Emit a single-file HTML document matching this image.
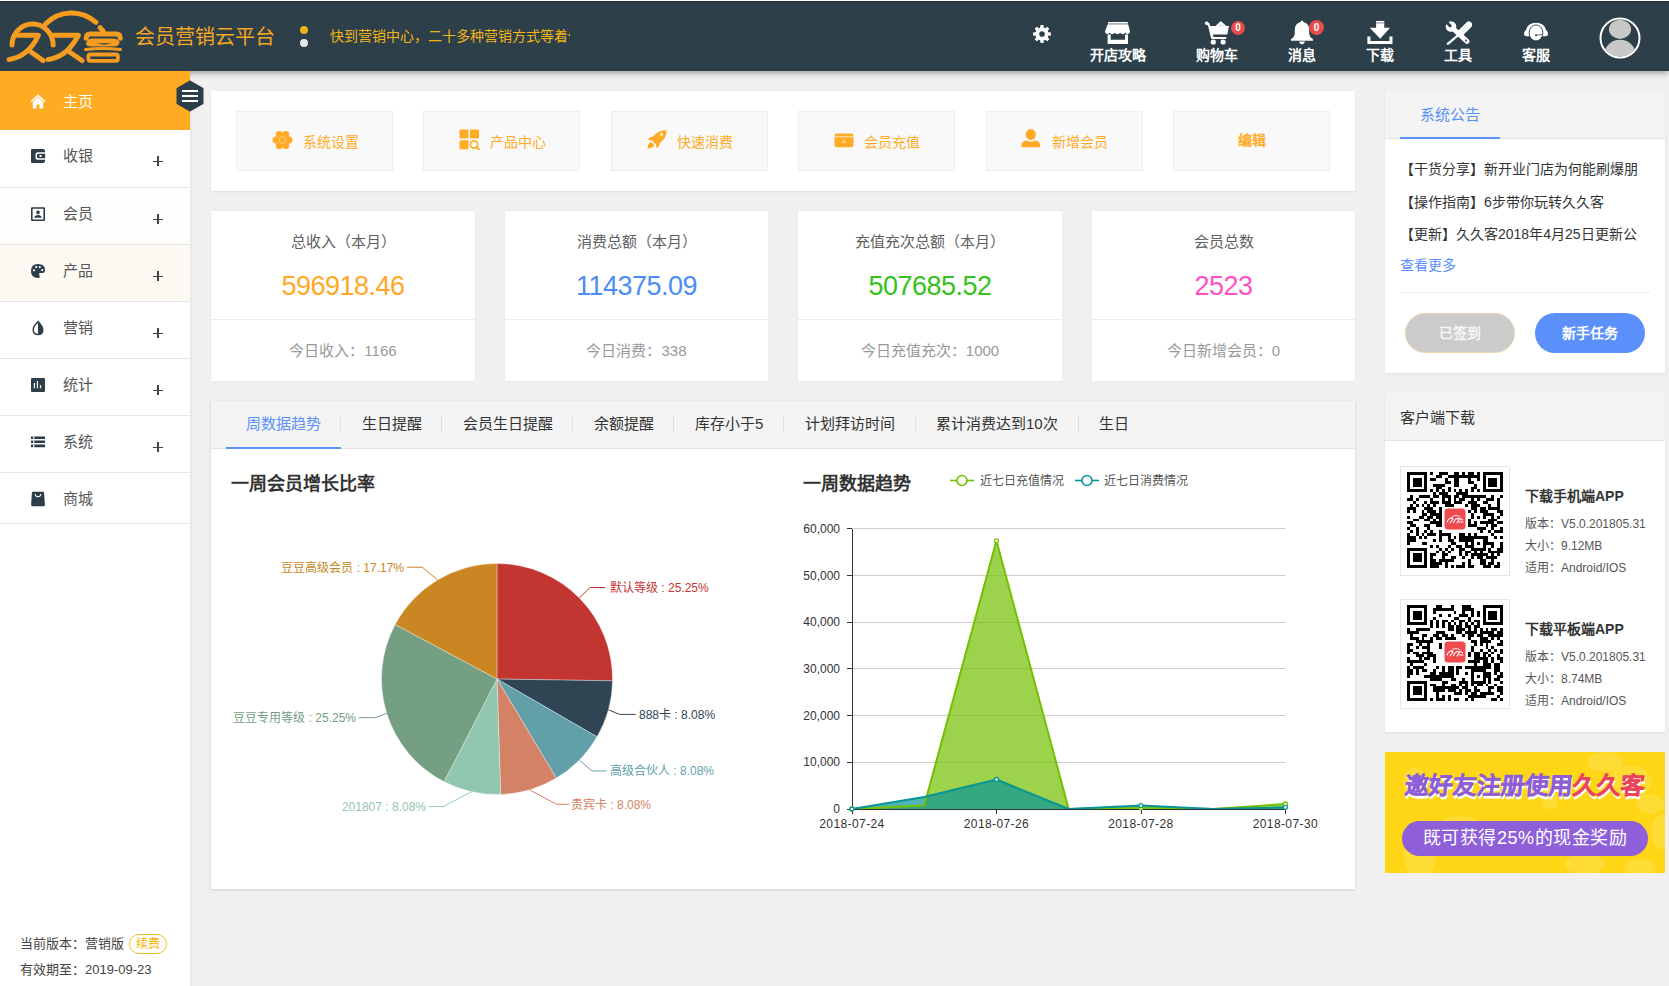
<!DOCTYPE html>
<html lang="zh-CN"><head><meta charset="utf-8">
<style>
*{margin:0;padding:0;box-sizing:border-box}
html,body{width:1669px;height:986px;overflow:hidden}
body{background:#f0f0f0;font-family:"Liberation Sans",sans-serif;position:relative;color:#333}
.a{position:absolute}
.t{position:absolute;white-space:nowrap;line-height:1}
#hdr{left:0;top:0;width:1669px;height:71px;background:#2d3f49;border-top:1px solid #fff;box-shadow:0 2px 6px rgba(0,0,0,.35);z-index:2}
#side{left:0;top:71px;width:190px;height:915px;background:#fff;z-index:3;box-shadow:1px 0 2px rgba(0,0,0,.06)}
.mi{position:absolute;left:0;width:190px;height:57px;border-bottom:1px solid #e6e6e6}
.mi .t{left:63px;top:18px;font-size:15px;color:#555}
.mi svg{position:absolute;left:30px;top:18px}
.plus{position:absolute;left:153px;top:26px;width:10px;height:10px}
.plus:before,.plus:after{content:"";position:absolute;background:#444}
.plus:before{left:0;top:4.6px;width:10px;height:1.2px}
.plus:after{left:4.4px;top:0;width:1.2px;height:10px}
.panel{position:absolute;background:#fff;box-shadow:0 1px 2px rgba(0,0,0,.07)}
.qb{position:absolute;top:111px;width:157px;height:60px;background:#f9f9f9;border:1px solid #eeeeee}
.qb .t{font-size:14px;color:#ffab26;top:23px}
.qb svg{position:absolute;top:18px}
.card{position:absolute;top:211px;height:170px;background:#fff;box-shadow:0 0 2px rgba(0,0,0,.05)}
.card .ttl{position:absolute;left:0;width:100%;top:23px;text-align:center;font-size:15px;line-height:1;color:#606060;white-space:nowrap}
.card .num{position:absolute;left:0;width:100%;top:62px;text-align:center;font-size:27px;letter-spacing:-0.5px;line-height:1;white-space:nowrap}
.card .div{position:absolute;left:0;top:108px;width:100%;height:1px;background:#ececec}
.card .sub{position:absolute;left:0;width:100%;top:132px;text-align:center;font-size:15px;line-height:1;color:#999;white-space:nowrap}
.tab{position:absolute;top:416px;font-size:15px;line-height:1;color:#333;white-space:nowrap}
.sep{position:absolute;top:415px;width:1px;height:18px;background:#e2e2e2}
</style></head><body>

<!-- HEADER -->
<div id="hdr" class="a"><div class="a" style="left:0;top:0;width:1669px;height:1px;background:#1f2f39"></div>
<svg class="a" style="left:0;top:-1px" width="130" height="71" viewBox="0 0 130 71"><g fill="none" stroke="#f39c1f" stroke-width="5" stroke-linecap="round" stroke-linejoin="round">
<path d="M12 45A20.6 21 0 0 1 53.2 45"/>
<path d="M45.5 24A36.2 36.2 0 0 1 96 22.4"/>
<path d="M16.5 35.3H38.4C33 47 25 57 9 59.6"/>
<path d="M31 52L43 60.5"/>
<path d="M53 35.3H78.4C72 47 64 57 48 59.6"/>
<path d="M69.5 52L82 60.5"/>
<path d="M100 27.6L103.2 31"/>
<path d="M86.2 38.3Q86.2 34 90 34H116.5Q120.2 34 120.2 38.3"/>
<path d="M85.5 49.5Q103 47.5 120.5 49.5" stroke-width="3"/>
<rect x="88.4" y="54.5" width="29.5" height="6.3" rx="2" stroke-width="3.8"/>
</g>
<path fill="#f39c1f" d="M86 43.5Q87 38.5 93 38.6L112 38.6Q120 38.8 119.5 43Q119 46.6 112 46.6L92 46.6Q85.5 46.5 86 43.5Z"/>
<path fill="#2d3f49" d="M97 43.2L111 43.2L104 44.8Z"/>
</svg>
<div class="t" style="left:135px;top:25.5px;font-size:20px;color:#f5a623;letter-spacing:0px">会员营销云平台</div>
<div class="a" style="left:300px;top:24.5px;width:8px;height:8px;border-radius:50%;background:#e9b10e"></div>
<div class="a" style="left:300px;top:37.5px;width:8px;height:8px;border-radius:50%;background:#e6e8ea"></div>
<div class="a" style="left:330px;top:26px;width:240px;height:20px;overflow:hidden"><div class="t" style="left:0;top:2px;font-size:14px;color:#f2b416">快到营销中心，二十多种营销方式等着你来体验</div></div>

<svg class="a" style="left:1032.5px;top:24px" width="18" height="18" viewBox="0 0 18 18"><path fill="#fff" fill-rule="evenodd" d="M7.14 2.67 L7.52 0.12 L10.48 0.12 L10.86 2.67 L12.17 3.21 L14.23 1.68 L16.32 3.77 L14.79 5.83 L15.33 7.14 L17.88 7.52 L17.88 10.48 L15.33 10.86 L14.79 12.17 L16.32 14.23 L14.23 16.32 L12.17 14.79 L10.86 15.33 L10.48 17.88 L7.52 17.88 L7.14 15.33 L5.83 14.79 L3.77 16.32 L1.68 14.23 L3.21 12.17 L2.67 10.86 L0.12 10.48 L0.12 7.52 L2.67 7.14 L3.21 5.83 L1.68 3.77 L3.77 1.68 L5.83 3.21ZM11.80 9.00A2.8 2.8 0 1 0 6.20 9.00A2.8 2.8 0 1 0 11.80 9.00Z"/></svg>

<svg class="a" style="left:1104px;top:20px" width="28" height="24" viewBox="0 0 28 24"><path fill="#fff" d="M4 1H23.8V2.4H4Z"/><path fill="#d5dade" d="M4 2.4H23.8L24.2 3.6H3.6Z"/><path fill="#fff" d="M3.6 3.6H24.2L26 10.6Q25.8 13 23.8 13Q22.3 13 21.5 11.8Q20.5 13.2 18.8 13.2Q17 13.2 16.2 11.8Q15.3 13.2 13.5 13.2Q11.7 13.2 10.8 11.8Q10 13.2 8.2 13.2Q6.5 13.2 5.5 11.8Q4.7 13 3.2 13Q1 13 1 10.6Z"/><path fill="#fff" d="M3.6 13.4H6.7V18.8H21V13.4H24V23H3.6Z"/></svg>
<div class="t" style="left:1090px;top:47px;font-size:14px;font-weight:bold;color:#fff">开店攻略</div>

<svg class="a" style="left:1204px;top:19px" width="27" height="26" viewBox="0 0 27 26"><g fill="#fff"><path d="M0.8 3.2Q0.8 1.5 2.5 1.5Q4 1.5 4.3 2.8H5.2L6.1 5.9H25L23.3 14.5H8.9L9.5 16.9H22.2V19H8.2Q7.3 19 7 18.1L3.9 5.2Q3.6 4.9 2.5 4.9Q0.8 4.9 0.8 3.2Z"/><circle cx="9.3" cy="22" r="2.6"/><circle cx="19.1" cy="22" r="2.6"/><path d="M11.5 6L16.8 0.9L22.3 6Z"/></g><path fill="#dfe3e6" d="M13 6.2L14.5 4.8H19.2L20.6 6.2Z"/></svg>
<div class="a" style="left:1231px;top:19.5px;width:14px;height:14px;border-radius:50%;background:#e94b4b;color:#fff;font-size:10px;font-weight:bold;line-height:14px;text-align:center">0</div>
<div class="t" style="left:1196px;top:47px;font-size:14px;font-weight:bold;color:#fff">购物车</div>

<svg class="a" style="left:1290px;top:19px" width="24" height="25" viewBox="0 0 24 25"><path fill="#fff" d="M12 0.5Q13.2 0.5 13.3 2Q19 3.2 19.2 9.5V14Q19.5 17 23 19.2V20.7H1V19.2Q4.5 17 4.8 14V9.5Q5 3.2 10.7 2Q10.8 0.5 12 0.5Z"/><path fill="#fff" d="M9.2 21.5H14.8Q14.5 24.3 12 24.3Q9.5 24.3 9.2 21.5Z"/></svg>
<div class="a" style="left:1309px;top:18.5px;width:15px;height:15px;border-radius:50%;background:#e94b4b;color:#fff;font-size:10px;font-weight:bold;line-height:15px;text-align:center">0</div>
<div class="t" style="left:1288px;top:47px;font-size:14px;font-weight:bold;color:#fff">消息</div>

<svg class="a" style="left:1366px;top:19px" width="28" height="25" viewBox="0 0 28 25"><path fill="#fff" d="M10.1 0.9H18.3V2.6H10.1Z"/><path fill="#c9cfd3" d="M10.1 2.6H18.3V4H10.1Z"/><path fill="#fff" d="M10.1 4H18.3V7.7H24.1L14.2 18.8L3.7 7.7H10.1Z"/><path fill="#fff" d="M1.4 16.4H4.4V21H23.5V16.4H26.5V24H1.4Z"/></svg>
<div class="t" style="left:1366px;top:47px;font-size:14px;font-weight:bold;color:#fff">下载</div>

<svg class="a" style="left:1444px;top:19px" width="28" height="26" viewBox="0 0 28 26"><g stroke="#fff" stroke-linecap="round" fill="none"><path d="M9.5 9L23 21.3" stroke-width="5"/><path d="M24.8 4.8L16.2 13.4" stroke-width="6.6"/><path d="M16.2 13.4L4.2 23.6" stroke-width="2.3"/></g><circle cx="7" cy="6.5" r="5.3" fill="#fff"/><path fill="#2d3f49" d="M0.6 0.6L3.2 0.6L7.6 5.2Q7.8 7.4 5.6 7.6L0.6 2.6Z"/><path d="M22.8 5.2L17.3 10.7M24.3 6.7L18.8 12.2" stroke="#c9cfd3" stroke-width="0.7"/><circle cx="22" cy="20.4" r="1" fill="#2d3f49"/><path fill="#fff" d="M3 25L2.6 23.6L4.8 21.7L5.8 22.7Z"/></svg>
<div class="t" style="left:1444px;top:47px;font-size:14px;font-weight:bold;color:#fff">工具</div>

<svg class="a" style="left:1523px;top:21px" width="26" height="20" viewBox="0 0 26 20"><path fill="#fff" d="M1 12Q1 9.2 2.8 8.2Q5 0.8 13 0.8Q21 0.8 23.2 8.2Q25 9.2 25 12Q25 14.3 22.6 14.3H3.4Q1 14.3 1 12Z"/><ellipse cx="13" cy="10.9" rx="6.9" ry="8" fill="#fff" stroke="#2d3f49" stroke-width="0.9"/><circle cx="13" cy="13.3" r="1" fill="#2d3f49"/><path d="M13 13.3L19.8 12.3" stroke="#2d3f49" stroke-width="0.7"/></svg>
<div class="t" style="left:1522px;top:47px;font-size:14px;font-weight:bold;color:#fff">客服</div>

<svg class="a" style="left:1599px;top:16px" width="42" height="42" viewBox="0 0 42 42"><defs><clipPath id="avc"><circle cx="21" cy="21" r="18.8"/></clipPath></defs><circle cx="21" cy="21" r="19.5" fill="none" stroke="#fff" stroke-width="2"/><g clip-path="url(#avc)" fill="#c8c8c8"><ellipse cx="21" cy="12.3" rx="11" ry="9.6"/><ellipse cx="21" cy="36.8" rx="15.5" ry="14"/></g></svg>
</div>

<!-- SIDEBAR -->
<div id="side" class="a">
<div class="a" style="left:0;top:0;width:190px;height:59px;background:#ffac22"></div>
<svg class="a" style="left:30px;top:23px" width="16" height="15" viewBox="0 0 16 15"><path fill="#fff" d="M8 0.3L15.6 7.2L14.6 8.3L8 2.4L1.4 8.3L0.4 7.2Z"/><path fill="#fff" d="M2.8 8L8 3.3L13.2 8V14.6H9.5V10.5H6.5V14.6H2.8Z"/></svg>
<div class="t" style="left:63px;top:23px;font-size:15px;color:#fff">主页</div>

<div class="mi" style="top:59px;height:58px;background:#fff"><svg width="16" height="16" viewBox="0 0 16 16"><path fill="#2d3e4a" fill-rule="evenodd" d="M2 1H13Q15 1 15 3V4.2H8Q5.5 4.2 5.5 6.8V9.2Q5.5 11.8 8 11.8H15V13Q15 15 13 15H2Q1 15 1 14V2Q1 1 2 1ZM8.5 5.7H15.2V10.3H8.5Q7 10.3 7 8.8V7.2Q7 5.7 8.5 5.7ZM9.5 7V9H11.5V7Z"/></svg><div class="t">收银</div><div class="plus"></div></div>
<div class="mi" style="top:117px;background:#fefdfb"><svg width="16" height="16" viewBox="0 0 16 16"><path fill="#2d3e4a" fill-rule="evenodd" d="M2 1.2H14Q15 1.2 15 2.2V14Q15 15 14 15H2Q1 15 1 14V2.2Q1 1.2 2 1.2ZM2.6 2.8V13.4H13.4V2.8ZM8 4.6A1.8 1.8 0 1 1 8 8.2A1.8 1.8 0 1 1 8 4.6ZM4.2 11.8Q5 9 8 9Q11 9 11.8 11.8Z"/></svg><div class="t">会员</div><div class="plus"></div></div>
<div class="mi" style="top:174px;background:#fdfaf3"><svg width="16" height="16" viewBox="0 0 16 16"><path fill="#2d3e4a" fill-rule="evenodd" d="M8 1Q15 1 15 7.2Q15 10 12 10H10.3Q9 10 9 11.2Q9 12 9.6 12.7Q10 13.4 9.4 14.4Q8.9 15 8 15Q1 15 1 8Q1 1 8 1ZM4 6.2A1.1 1.1 0 1 0 4 8.4A1.1 1.1 0 1 0 4 6.2ZM6.2 3A1.1 1.1 0 1 0 6.2 5.2A1.1 1.1 0 1 0 6.2 3ZM9.8 3A1.1 1.1 0 1 0 9.8 5.2A1.1 1.1 0 1 0 9.8 3ZM12.2 6A1.1 1.1 0 1 0 12.2 8.2A1.1 1.1 0 1 0 12.2 6Z"/></svg><div class="t">产品</div><div class="plus"></div></div>
<div class="mi" style="top:231px;background:#fff"><svg width="16" height="16" viewBox="0 0 16 16"><path fill="#2d3e4a" fill-rule="evenodd" d="M8 0.5Q13.5 6 13.5 9.8Q13.5 15.3 8 15.3Q2.5 15.3 2.5 9.8Q2.5 6 8 0.5ZM8 2.8Q3.9 7 3.9 9.8Q3.9 13.8 8 13.9Z"/></svg><div class="t">营销</div><div class="plus"></div></div>
<div class="mi" style="top:288px;background:#fff"><svg width="16" height="16" viewBox="0 0 16 16"><path fill="#2d3e4a" fill-rule="evenodd" d="M2.2 1H13.8Q15 1 15 2.2V13.8Q15 15 13.8 15H2.2Q1 15 1 13.8V2.2Q1 1 2.2 1ZM3.8 6V11.2H5V6ZM6.8 4V11.2H8.1V4ZM9.9 8V11.2H11.2V8Z"/></svg><div class="t">统计</div><div class="plus"></div></div>
<div class="mi" style="top:345px;background:#fff"><svg width="16" height="16" viewBox="0 0 16 16"><path fill="#2d3e4a" d="M1 2.5H3.2V5H1ZM4.3 2.5H15V5H4.3ZM1 6.4H3.2V9.1H1ZM4.3 6.4H15V9.1H4.3ZM1 10.6H3.2V13.3H1ZM4.3 10.6H15V13.3H4.3Z"/></svg><div class="t">系统</div><div class="plus"></div></div>
<div class="mi" style="top:402px;height:51px;background:#fff"><svg width="16" height="16" viewBox="0 0 16 16"><path fill="#2d3e4a" fill-rule="evenodd" d="M3 0.8H13Q14 0.8 14.1 2L14.9 13.8Q15 15.2 13.6 15.2H2.4Q1 15.2 1.1 13.8L1.9 2Q2 0.8 3 0.8ZM4.7 3Q5 6.3 8 6.3Q11 6.3 11.3 3H10.3Q10 5.2 8 5.2Q6 5.2 5.7 3Z"/></svg><div class="t">商城</div></div>

<div class="t" style="left:20px;top:866px;font-size:13px;color:#444">当前版本：营销版</div>
<div class="a" style="left:129px;top:863px;width:38px;height:20px;border:1px solid #f5b82a;border-radius:10px;font-size:12px;line-height:18px;text-align:center;color:#f5b200">续费</div>
<div class="t" style="left:20px;top:892px;font-size:13px;color:#444">有效期至：2019-09-23</div>
</div>
<svg class="a" style="left:176px;top:80px;z-index:4" width="28" height="32" viewBox="0 0 28 32"><path fill="#2d3f49" d="M14 1.8L26.2 8.8V23.2L14 30.2L1.8 23.2V8.8Z" stroke="#2d3f49" stroke-width="2.6" stroke-linejoin="round"/><path fill="#fff" d="M6 10H22V12H6ZM6 15H22V17H6ZM6 20H22V22H6Z"/></svg>

<!-- MAIN -->
<div class="panel" style="left:211px;top:91px;width:1144px;height:100px"></div>
<div class="qb" style="left:236px"><svg style="left:35px;top:18px" width="21" height="20" viewBox="0 0 21 20"><g fill="#ffab26"><circle cx="10.5" cy="10" r="7.3"/><circle cx="13.80" cy="4.28" r="3.4"/><circle cx="17.10" cy="10.00" r="3.4"/><circle cx="13.80" cy="15.72" r="3.4"/><circle cx="7.20" cy="15.72" r="3.4"/><circle cx="3.90" cy="10.00" r="3.4"/><circle cx="7.20" cy="4.28" r="3.4"/></g><ellipse cx="10.5" cy="10" rx="3.3" ry="3.5" fill="none" stroke="#ffdca0" stroke-width="0.7"/></svg><div class="t" style="left:66px">系统设置</div></div>
<div class="qb" style="left:423px"><svg style="left:35px;top:17px" width="21" height="21" viewBox="0 0 21 21"><g fill="#ffab26"><rect x="0.5" y="0.5" width="9" height="9" rx="1.2"/><rect x="11" y="0.5" width="9" height="9" rx="1.2"/><rect x="0.5" y="11.3" width="9" height="9" rx="1.2"/></g><circle cx="15" cy="15.5" r="3.6" fill="none" stroke="#ffab26" stroke-width="1.7"/><path d="M17.5 18L20 20.5" stroke="#ffab26" stroke-width="1.8" stroke-linecap="round"/></svg><div class="t" style="left:66px">产品中心</div></div>
<div class="qb" style="left:611px"><svg style="left:35px;top:17px" width="20" height="20" viewBox="0 0 21 21"><path fill="#ffab26" fill-rule="evenodd" d="M20.5 1.2Q20.8 7.5 16 12.6Q14.6 14 13.3 14.6Q13.6 17.6 10.8 19.6L10 20L9.5 16.4L5 12L1 11.5Q3 8 6.5 8Q7.5 6.5 8.7 5.5Q13.5 1 20.5 1.2ZM15.3 4.2A1.5 1.5 0 1 0 15.3 7.2A1.5 1.5 0 1 0 15.3 4.2Z"/><path fill="#ffab26" d="M4.2 13.5L7.8 17Q5.5 20.3 0.5 20.5Q0.7 15.8 4.2 13.5Z"/></svg><div class="t" style="left:65px">快速消费</div></div>
<div class="qb" style="left:798px"><svg style="left:35px;top:20.5px" width="20" height="15" viewBox="0 0 20 16" preserveAspectRatio="none"><path fill="#ffab26" d="M2.8 0.5H17.2Q19.5 0.5 19.5 2.8V3.6H0.5V2.8Q0.5 0.5 2.8 0.5Z"/><path fill="#ffab26" d="M0.5 4.5H19.5V13Q19.5 15.3 17.2 15.3H2.8Q0.5 15.3 0.5 13Z"/><path fill="none" stroke="#ffd98a" stroke-width="0.7" d="M8.6 6.5L10 8.3L11.4 6.5M10 8.3V11.3M8.2 9H11.8M8.2 10.2H11.8"/></svg><div class="t" style="left:65px">会员充值</div></div>
<div class="qb" style="left:986px"><svg style="left:34px;top:17px" width="20" height="19" viewBox="0 0 21 20"><ellipse cx="10.3" cy="5.8" rx="5.4" ry="5.7" fill="#ffab26"/><path fill="#ffab26" d="M5.3 12.2Q7.5 13.3 10.3 13.3Q13 13.3 15.3 12.2Q20 13 20.3 17.5Q20.3 19.3 18.5 19.3H2.2Q0.3 19.3 0.3 17.5Q0.6 13 5.3 12.2Z"/></svg><div class="t" style="left:65px">新增会员</div></div>
<div class="qb" style="left:1173px"><div class="t" style="left:64px;top:21px;font-weight:bold">编辑</div></div>

<div class="card" style="left:211px;width:264px"><div class="ttl">总收入（本月）</div><div class="num" style="color:#ffa726">596918.46</div><div class="div"></div><div class="sub">今日收入：1166</div></div>
<div class="card" style="left:505px;width:263px"><div class="ttl">消费总额（本月）</div><div class="num" style="color:#4d8df4">114375.09</div><div class="div"></div><div class="sub">今日消费：338</div></div>
<div class="card" style="left:798px;width:264px"><div class="ttl">充值充次总额（本月）</div><div class="num" style="color:#36c21c">507685.52</div><div class="div"></div><div class="sub">今日充值充次：1000</div></div>
<div class="card" style="left:1092px;width:263px"><div class="ttl">会员总数</div><div class="num" style="color:#ff50c3">2523</div><div class="div"></div><div class="sub">今日新增会员：0</div></div>

<div class="panel" style="left:211px;top:401px;width:1144px;height:488px;box-shadow:0 1px 3px rgba(0,0,0,.13)"></div>
<div class="a" style="left:211px;top:401px;width:1144px;height:48px;background:#f4f4f4;border-bottom:1px solid #e8e3e3"></div>
<div class="a" style="left:226px;top:447px;width:115px;height:2px;background:#5b8ff9"></div>
<div class="tab" style="left:246px;color:#5b8ff9">周数据趋势</div>
<div class="sep" style="left:340px"></div>
<div class="tab" style="left:362px">生日提醒</div>
<div class="sep" style="left:441px"></div>
<div class="tab" style="left:463px">会员生日提醒</div>
<div class="sep" style="left:572px"></div>
<div class="tab" style="left:594px">余额提醒</div>
<div class="sep" style="left:673px"></div>
<div class="tab" style="left:695px">库存小于5</div>
<div class="sep" style="left:783px"></div>
<div class="tab" style="left:805px">计划拜访时间</div>
<div class="sep" style="left:915px"></div>
<div class="tab" style="left:936px">累计消费达到10次</div>
<div class="sep" style="left:1078px"></div>
<div class="tab" style="left:1099px">生日</div>
<div class="t" style="left:231px;top:475px;font-size:18px;font-weight:bold;color:#333">一周会员增长比率</div>
<div class="t" style="left:803px;top:475px;font-size:18px;font-weight:bold;color:#333">一周数据趋势</div>
<svg class="a" style="left:0;top:0" width="1669" height="986" viewBox="0 0 1669 986">
<g><path fill="#c23531" stroke="#fff" stroke-width="0.35" stroke-linejoin="round" d="M497 679L497.00 563.50A115.5 115.5 0 0 1 612.49 680.83Z"/>
<path fill="#2f4554" stroke="#fff" stroke-width="0.35" stroke-linejoin="round" d="M497 679L612.49 680.83A115.5 115.5 0 0 1 597.03 736.75Z"/>
<path fill="#61a0a8" stroke="#fff" stroke-width="0.35" stroke-linejoin="round" d="M497 679L597.03 736.75A115.5 115.5 0 0 1 556.33 778.10Z"/>
<path fill="#d48265" stroke="#fff" stroke-width="0.35" stroke-linejoin="round" d="M497 679L556.33 778.10A115.5 115.5 0 0 1 500.66 794.44Z"/>
<path fill="#91c7ae" stroke="#fff" stroke-width="0.35" stroke-linejoin="round" d="M497 679L500.66 794.44A115.5 115.5 0 0 1 444.07 781.66Z"/>
<path fill="#749f83" stroke="#fff" stroke-width="0.35" stroke-linejoin="round" d="M497 679L444.07 781.66A115.5 115.5 0 0 1 395.19 624.45Z"/>
<path fill="#ca8622" stroke="#fff" stroke-width="0.35" stroke-linejoin="round" d="M497 679L395.19 624.45A115.5 115.5 0 0 1 497.00 563.50Z"/></g>
<g fill="none" stroke-width="1">
<path stroke="#c23531" d="M579.3 598L590 587.5H605"/>
<path stroke="#2f4554" d="M608.3 709.8L619.5 714.4H635.7"/>
<path stroke="#61a0a8" d="M579.3 760L592 771H606.6"/>
<path stroke="#d48265" d="M529.5 789.8L556.5 804.3H569.4"/>
<path stroke="#91c7ae" d="M471.6 791.7L443.2 806.6H428.7"/>
<path stroke="#749f83" d="M386.7 713.3L375.3 717.6H359"/>
<path stroke="#ca8622" d="M437.7 580L422.2 567.2H407"/>
</g>
<g font-family="Liberation Sans, sans-serif" font-size="12">
<text x="610" y="592" fill="#c23531">默认等级 : 25.25%</text>
<text x="639" y="718.5" fill="#2f4554">888卡 : 8.08%</text>
<text x="610" y="775" fill="#61a0a8">高级合伙人 : 8.08%</text>
<text x="571" y="808.5" fill="#d48265">贵宾卡 : 8.08%</text>
<text x="426" y="810.5" fill="#91c7ae" text-anchor="end">201807 : 8.08%</text>
<text x="356" y="722" fill="#749f83" text-anchor="end">豆豆专用等级 : 25.25%</text>
<text x="404" y="571.5" fill="#ca8622" text-anchor="end">豆豆高级会员 : 17.17%</text>
</g>
<path d="M852 762.5H1285.5" stroke="#cfcfcf" stroke-width="1"/><path d="M852 715.5H1285.5" stroke="#cfcfcf" stroke-width="1"/><path d="M852 668.5H1285.5" stroke="#cfcfcf" stroke-width="1"/><path d="M852 622.5H1285.5" stroke="#cfcfcf" stroke-width="1"/><path d="M852 575.5H1285.5" stroke="#cfcfcf" stroke-width="1"/><path d="M852 528.5H1285.5" stroke="#cfcfcf" stroke-width="1"/>
<path d="M852.00 809.00 924.23 805.59 996.46 540.79 1068.69 809.00 1140.92 808.07 1213.15 809.00 1285.38 804.01" fill="none"/>
<path d="M852.00 809 L852.00 809.00 L924.23 805.59 L996.46 540.79 L1068.69 809.00 L1140.92 808.07 L1213.15 809.00 L1285.38 804.01 L1285.38 809Z" fill="#73c000" fill-opacity="0.7"/>
<path d="M852.00 809 L852.00 809.00 L924.23 797.01 L996.46 779.50 L1068.69 809.00 L1140.92 805.59 L1213.15 809.00 L1285.38 807.32 L1285.38 809Z" fill="#089595" fill-opacity="0.7"/>
<polyline points="852.00,809.00 924.23,805.59 996.46,540.79 1068.69,809.00 1140.92,808.07 1213.15,809.00 1285.38,804.01" fill="none" stroke="#73c000" stroke-width="2" stroke-linejoin="round"/>
<polyline points="852.00,809.00 924.23,797.01 996.46,779.50 1068.69,809.00 1140.92,805.59 1213.15,809.00 1285.38,807.32" fill="none" stroke="#089595" stroke-width="2" stroke-linejoin="round"/>
<path d="M852.5 529V809.5H1285.5" fill="none" stroke="#333" stroke-width="1"/>
<path d="M847 809.5H852" stroke="#333" stroke-width="1"/><path d="M847 762.5H852" stroke="#333" stroke-width="1"/><path d="M847 715.5H852" stroke="#333" stroke-width="1"/><path d="M847 668.5H852" stroke="#333" stroke-width="1"/><path d="M847 622.5H852" stroke="#333" stroke-width="1"/><path d="M847 575.5H852" stroke="#333" stroke-width="1"/><path d="M847 528.5H852" stroke="#333" stroke-width="1"/><path d="M852.5 809V814" stroke="#333" stroke-width="1"/><path d="M996.5 809V814" stroke="#333" stroke-width="1"/><path d="M1141.5 809V814" stroke="#333" stroke-width="1"/><path d="M1285.5 809V814" stroke="#333" stroke-width="1"/><circle cx="852.00" cy="809.00" r="2" fill="#fff" stroke="#73c000" stroke-width="1.3"/><circle cx="996.46" cy="540.79" r="2" fill="#fff" stroke="#73c000" stroke-width="1.3"/><circle cx="1140.92" cy="808.07" r="2" fill="#fff" stroke="#73c000" stroke-width="1.3"/><circle cx="1285.38" cy="804.01" r="2" fill="#fff" stroke="#73c000" stroke-width="1.3"/><circle cx="852.00" cy="809.00" r="2" fill="#fff" stroke="#089595" stroke-width="1.3"/><circle cx="996.46" cy="779.50" r="2" fill="#fff" stroke="#089595" stroke-width="1.3"/><circle cx="1140.92" cy="805.59" r="2" fill="#fff" stroke="#089595" stroke-width="1.3"/><circle cx="1285.38" cy="807.32" r="2" fill="#fff" stroke="#089595" stroke-width="1.3"/>
<g font-family="Liberation Sans, sans-serif" font-size="12" fill="#333"><text x="840" y="813.0" text-anchor="end">0</text><text x="840" y="766.3" text-anchor="end">10,000</text><text x="840" y="719.7" text-anchor="end">20,000</text><text x="840" y="673.0" text-anchor="end">30,000</text><text x="840" y="626.3" text-anchor="end">40,000</text><text x="840" y="579.7" text-anchor="end">50,000</text><text x="840" y="533.0" text-anchor="end">60,000</text><text x="852.00" y="828" text-anchor="middle" letter-spacing="0.4">2018-07-24</text><text x="996.46" y="828" text-anchor="middle" letter-spacing="0.4">2018-07-26</text><text x="1140.92" y="828" text-anchor="middle" letter-spacing="0.4">2018-07-28</text><text x="1285.38" y="828" text-anchor="middle" letter-spacing="0.4">2018-07-30</text></g>
<g fill="none" stroke-width="1.6"><path stroke="#73c000" d="M950 480.5H974"/><circle cx="962" cy="480.5" r="5" fill="#fff" stroke="#73c000"/><path stroke="#089595" d="M1075 480.5H1099"/><circle cx="1087" cy="480.5" r="5" fill="#fff" stroke="#089595"/></g>
<g font-family="Liberation Sans, sans-serif" font-size="12" fill="#555"><text x="980" y="485">近七日充值情况</text><text x="1104" y="485">近七日消费情况</text></g>
</svg>

<div class="panel" style="left:1385px;top:91px;width:280px;height:282px"></div>
<div class="a" style="left:1385px;top:91px;width:280px;height:48px;background:#f4f4f4;border-bottom:1px solid #e8e3e3"></div>
<div class="a" style="left:1400px;top:137px;width:100px;height:2px;background:#5b8ff9"></div>
<div class="t" style="left:1420px;top:107px;font-size:15px;color:#5b8ff9">系统公告</div>
<div class="t" style="left:1400px;top:162px;font-size:14px;color:#333">【干货分享】新开业门店为何能刷爆朋</div>
<div class="t" style="left:1400px;top:195px;font-size:14px;color:#333">【操作指南】6步带你玩转久久客</div>
<div class="t" style="left:1400px;top:227px;font-size:14px;color:#333">【更新】久久客2018年4月25日更新公</div>
<div class="t" style="left:1400px;top:258px;font-size:14px;color:#5b8ff9">查看更多</div>
<div class="a" style="left:1400px;top:292px;width:250px;height:1px;background:#ececec"></div>
<div class="a" style="left:1405px;top:313px;width:110px;height:40px;border-radius:20px;background:#cbcbcb;border:1px solid #ead7ad;color:#f7f7f7;font-size:14px;font-weight:bold;line-height:38px;text-align:center">已签到</div>
<div class="a" style="left:1535px;top:313px;width:110px;height:40px;border-radius:20px;background:#5b8ff9;color:#fff;font-size:14px;font-weight:bold;line-height:40px;text-align:center">新手任务</div>

<div class="panel" style="left:1385px;top:393px;width:280px;height:339px"></div>
<div class="a" style="left:1385px;top:393px;width:280px;height:48px;background:#f4f4f4;border-bottom:1px solid #e8e3e3"></div>
<div class="t" style="left:1400px;top:410px;font-size:15px;color:#333">客户端下载</div>
<div class="a" style="left:1400px;top:466px;width:110px;height:110px;background:#fff;border:1px solid #e6e6e6"></div>
<svg class="a" style="left:1407px;top:472px" width="96" height="96" viewBox="0 0 33 33" shape-rendering="crispEdges"><path fill="#000" d="M0 0h7v1h-7zM8 0h1v1h-1zM11 0h3v1h-3zM16 0h2v1h-2zM19 0h1v1h-1zM21 0h2v1h-2zM24 0h1v1h-1zM26 0h7v1h-7zM0 1h1v1h-1zM6 1h1v1h-1zM10 1h2v1h-2zM14 1h11v1h-11zM26 1h1v1h-1zM32 1h1v1h-1zM0 2h1v1h-1zM2 2h3v1h-3zM6 2h1v1h-1zM8 2h2v1h-2zM13 2h1v1h-1zM16 2h2v1h-2zM21 2h1v1h-1zM24 2h1v1h-1zM26 2h1v1h-1zM28 2h3v1h-3zM32 2h1v1h-1zM0 3h1v1h-1zM2 3h3v1h-3zM6 3h1v1h-1zM13 3h2v1h-2zM16 3h2v1h-2zM21 3h2v1h-2zM26 3h1v1h-1zM28 3h3v1h-3zM32 3h1v1h-1zM0 4h1v1h-1zM2 4h3v1h-3zM6 4h1v1h-1zM9 4h4v1h-4zM16 4h2v1h-2zM23 4h1v1h-1zM26 4h1v1h-1zM28 4h3v1h-3zM32 4h1v1h-1zM0 5h1v1h-1zM6 5h1v1h-1zM10 5h2v1h-2zM14 5h1v1h-1zM22 5h2v1h-2zM26 5h1v1h-1zM32 5h1v1h-1zM0 6h7v1h-7zM8 6h1v1h-1zM10 6h1v1h-1zM12 6h1v1h-1zM14 6h1v1h-1zM16 6h1v1h-1zM18 6h1v1h-1zM20 6h1v1h-1zM22 6h1v1h-1zM24 6h1v1h-1zM26 6h7v1h-7zM9 7h1v1h-1zM11 7h3v1h-3zM17 7h4v1h-4zM1 8h1v1h-1zM4 8h4v1h-4zM9 8h2v1h-2zM12 8h3v1h-3zM16 8h2v1h-2zM19 8h8v1h-8zM29 8h1v1h-1zM32 8h1v1h-1zM0 9h2v1h-2zM3 9h1v1h-1zM8 9h1v1h-1zM12 9h1v1h-1zM14 9h1v1h-1zM16 9h1v1h-1zM18 9h2v1h-2zM22 9h1v1h-1zM24 9h1v1h-1zM27 9h3v1h-3zM31 9h1v1h-1zM2 10h1v1h-1zM6 10h1v1h-1zM8 10h3v1h-3zM12 10h3v1h-3zM16 10h3v1h-3zM21 10h3v1h-3zM26 10h2v1h-2zM31 10h1v1h-1zM1 11h1v1h-1zM3 11h1v1h-1zM5 11h1v1h-1zM7 11h1v1h-1zM9 11h1v1h-1zM13 11h3v1h-3zM20 11h1v1h-1zM22 11h3v1h-3zM28 11h1v1h-1zM31 11h1v1h-1zM0 12h3v1h-3zM6 12h3v1h-3zM11 12h1v1h-1zM22 12h2v1h-2zM25 12h2v1h-2zM28 12h4v1h-4zM0 13h1v1h-1zM2 13h1v1h-1zM5 13h1v1h-1zM7 13h3v1h-3zM11 13h1v1h-1zM21 13h1v1h-1zM23 13h1v1h-1zM25 13h3v1h-3zM31 13h2v1h-2zM5 14h2v1h-2zM8 14h4v1h-4zM22 14h1v1h-1zM26 14h4v1h-4zM32 14h1v1h-1zM0 15h1v1h-1zM4 15h2v1h-2zM7 15h2v1h-2zM10 15h2v1h-2zM22 15h1v1h-1zM24 15h1v1h-1zM26 15h1v1h-1zM29 15h1v1h-1zM31 15h1v1h-1zM2 16h2v1h-2zM6 16h2v1h-2zM9 16h1v1h-1zM11 16h1v1h-1zM21 16h1v1h-1zM28 16h3v1h-3zM0 17h2v1h-2zM8 17h4v1h-4zM21 17h1v1h-1zM23 17h1v1h-1zM25 17h5v1h-5zM31 17h2v1h-2zM1 18h2v1h-2zM6 18h2v1h-2zM10 18h2v1h-2zM21 18h3v1h-3zM27 18h1v1h-1zM29 18h2v1h-2zM0 19h1v1h-1zM3 19h1v1h-1zM7 19h1v1h-1zM24 19h3v1h-3zM29 19h1v1h-1zM32 19h1v1h-1zM1 20h1v1h-1zM3 20h1v1h-1zM6 20h1v1h-1zM8 20h1v1h-1zM11 20h1v1h-1zM25 20h1v1h-1zM28 20h1v1h-1zM30 20h3v1h-3zM0 21h1v1h-1zM3 21h1v1h-1zM5 21h1v1h-1zM7 21h3v1h-3zM11 21h4v1h-4zM18 21h2v1h-2zM21 21h1v1h-1zM23 21h1v1h-1zM29 21h1v1h-1zM0 22h3v1h-3zM4 22h1v1h-1zM6 22h1v1h-1zM11 22h1v1h-1zM14 22h1v1h-1zM16 22h1v1h-1zM18 22h10v1h-10zM30 22h1v1h-1zM32 22h1v1h-1zM0 23h3v1h-3zM9 23h1v1h-1zM11 23h1v1h-1zM14 23h2v1h-2zM18 23h5v1h-5zM26 23h2v1h-2zM0 24h1v1h-1zM5 24h2v1h-2zM15 24h2v1h-2zM20 24h1v1h-1zM22 24h1v1h-1zM24 24h1v1h-1zM26 24h4v1h-4zM32 24h1v1h-1zM8 25h1v1h-1zM10 25h1v1h-1zM14 25h1v1h-1zM17 25h2v1h-2zM20 25h3v1h-3zM26 25h1v1h-1zM29 25h1v1h-1zM32 25h1v1h-1zM0 26h7v1h-7zM11 26h1v1h-1zM13 26h1v1h-1zM15 26h1v1h-1zM18 26h2v1h-2zM22 26h5v1h-5zM28 26h1v1h-1zM31 26h2v1h-2zM0 27h1v1h-1zM6 27h1v1h-1zM10 27h1v1h-1zM12 27h1v1h-1zM14 27h1v1h-1zM18 27h1v1h-1zM20 27h2v1h-2zM23 27h1v1h-1zM25 27h1v1h-1zM28 27h5v1h-5zM0 28h1v1h-1zM2 28h3v1h-3zM6 28h1v1h-1zM8 28h2v1h-2zM12 28h2v1h-2zM18 28h1v1h-1zM20 28h1v1h-1zM22 28h6v1h-6zM29 28h1v1h-1zM31 28h1v1h-1zM0 29h1v1h-1zM2 29h3v1h-3zM6 29h1v1h-1zM8 29h1v1h-1zM12 29h1v1h-1zM15 29h2v1h-2zM19 29h1v1h-1zM22 29h1v1h-1zM24 29h2v1h-2zM27 29h4v1h-4zM0 30h1v1h-1zM2 30h3v1h-3zM6 30h1v1h-1zM8 30h2v1h-2zM11 30h5v1h-5zM21 30h1v1h-1zM25 30h2v1h-2zM29 30h1v1h-1zM0 31h1v1h-1zM6 31h1v1h-1zM8 31h4v1h-4zM13 31h1v1h-1zM19 31h1v1h-1zM21 31h1v1h-1zM25 31h2v1h-2zM28 31h2v1h-2zM31 31h1v1h-1zM0 32h7v1h-7zM8 32h3v1h-3zM13 32h1v1h-1zM15 32h1v1h-1zM17 32h3v1h-3zM21 32h2v1h-2zM26 32h3v1h-3zM30 32h2v1h-2z"/></svg>
<svg class="a" style="left:1443px;top:507px" width="24" height="24" viewBox="0 0 24 24"><rect x="0" y="0" width="24" height="24" rx="3" fill="#fff"/><rect x="1.5" y="1.5" width="21" height="21" rx="3.5" fill="#ec4b4f"/><path d="M4 15Q6 10 9.5 11.5M7 16L10 12M10.5 15.5Q12.5 10.5 16 12M14 16L16 13M16.5 12Q17.5 11 19.5 13M16.5 15H20" stroke="#fff" stroke-width="1.1" fill="none" stroke-linecap="round"/><path d="M8 11Q12 6.5 17 10" stroke="#fff" stroke-width="0.9" fill="none"/></svg><div class="a" style="left:1400px;top:599px;width:110px;height:110px;background:#fff;border:1px solid #e6e6e6"></div>
<svg class="a" style="left:1407px;top:605px" width="96" height="96" viewBox="0 0 33 33" shape-rendering="crispEdges"><path fill="#000" d="M0 0h7v1h-7zM10 0h2v1h-2zM15 0h1v1h-1zM19 0h3v1h-3zM26 0h7v1h-7zM0 1h1v1h-1zM6 1h1v1h-1zM9 1h7v1h-7zM19 1h4v1h-4zM26 1h1v1h-1zM32 1h1v1h-1zM0 2h1v1h-1zM2 2h3v1h-3zM6 2h1v1h-1zM9 2h1v1h-1zM16 2h1v1h-1zM19 2h1v1h-1zM22 2h1v1h-1zM24 2h1v1h-1zM26 2h1v1h-1zM28 2h3v1h-3zM32 2h1v1h-1zM0 3h1v1h-1zM2 3h3v1h-3zM6 3h1v1h-1zM11 3h1v1h-1zM14 3h1v1h-1zM18 3h3v1h-3zM22 3h1v1h-1zM24 3h1v1h-1zM26 3h1v1h-1zM28 3h3v1h-3zM32 3h1v1h-1zM0 4h1v1h-1zM2 4h3v1h-3zM6 4h1v1h-1zM9 4h1v1h-1zM16 4h2v1h-2zM21 4h1v1h-1zM26 4h1v1h-1zM28 4h3v1h-3zM32 4h1v1h-1zM0 5h1v1h-1zM6 5h1v1h-1zM8 5h1v1h-1zM10 5h1v1h-1zM12 5h2v1h-2zM15 5h1v1h-1zM18 5h2v1h-2zM21 5h1v1h-1zM23 5h2v1h-2zM26 5h1v1h-1zM32 5h1v1h-1zM0 6h7v1h-7zM8 6h1v1h-1zM10 6h1v1h-1zM12 6h1v1h-1zM14 6h1v1h-1zM16 6h1v1h-1zM18 6h1v1h-1zM20 6h1v1h-1zM22 6h1v1h-1zM24 6h1v1h-1zM26 6h7v1h-7zM8 7h1v1h-1zM10 7h1v1h-1zM12 7h1v1h-1zM14 7h2v1h-2zM17 7h2v1h-2zM20 7h2v1h-2zM23 7h2v1h-2zM0 8h1v1h-1zM3 8h5v1h-5zM14 8h2v1h-2zM17 8h3v1h-3zM21 8h1v1h-1zM23 8h1v1h-1zM25 8h1v1h-1zM27 8h1v1h-1zM29 8h2v1h-2zM32 8h1v1h-1zM0 9h4v1h-4zM10 9h3v1h-3zM17 9h2v1h-2zM20 9h4v1h-4zM25 9h5v1h-5zM31 9h2v1h-2zM1 10h1v1h-1zM5 10h2v1h-2zM9 10h2v1h-2zM12 10h2v1h-2zM15 10h1v1h-1zM19 10h1v1h-1zM21 10h2v1h-2zM24 10h2v1h-2zM28 10h5v1h-5zM1 11h3v1h-3zM5 11h1v1h-1zM8 11h1v1h-1zM10 11h2v1h-2zM13 11h4v1h-4zM21 11h1v1h-1zM25 11h3v1h-3zM29 11h1v1h-1zM31 11h1v1h-1zM3 12h6v1h-6zM22 12h2v1h-2zM25 12h4v1h-4zM32 12h1v1h-1zM0 13h2v1h-2zM4 13h1v1h-1zM7 13h1v1h-1zM11 13h1v1h-1zM23 13h1v1h-1zM25 13h1v1h-1zM27 13h1v1h-1zM31 13h2v1h-2zM0 14h1v1h-1zM3 14h1v1h-1zM5 14h3v1h-3zM11 14h1v1h-1zM22 14h1v1h-1zM27 14h1v1h-1zM29 14h1v1h-1zM0 15h2v1h-2zM7 15h1v1h-1zM22 15h1v1h-1zM25 15h1v1h-1zM28 15h1v1h-1zM30 15h1v1h-1zM32 15h1v1h-1zM0 16h1v1h-1zM2 16h2v1h-2zM5 16h4v1h-4zM21 16h1v1h-1zM23 16h2v1h-2zM26 16h2v1h-2zM29 16h1v1h-1zM32 16h1v1h-1zM3 17h3v1h-3zM7 17h3v1h-3zM21 17h1v1h-1zM23 17h2v1h-2zM26 17h1v1h-1zM28 17h1v1h-1zM31 17h1v1h-1zM0 18h1v1h-1zM4 18h1v1h-1zM6 18h2v1h-2zM9 18h1v1h-1zM23 18h5v1h-5zM29 18h1v1h-1zM31 18h2v1h-2zM0 19h6v1h-6zM9 19h1v1h-1zM21 19h4v1h-4zM26 19h2v1h-2zM29 19h1v1h-1zM32 19h1v1h-1zM1 20h1v1h-1zM6 20h1v1h-1zM23 20h1v1h-1zM26 20h3v1h-3zM30 20h2v1h-2zM0 21h1v1h-1zM2 21h4v1h-4zM10 21h1v1h-1zM12 21h1v1h-1zM14 21h2v1h-2zM17 21h2v1h-2zM20 21h9v1h-9zM30 21h2v1h-2zM0 22h2v1h-2zM3 22h1v1h-1zM5 22h2v1h-2zM9 22h1v1h-1zM12 22h1v1h-1zM14 22h2v1h-2zM17 22h1v1h-1zM22 22h5v1h-5zM30 22h2v1h-2zM0 23h2v1h-2zM3 23h1v1h-1zM8 23h2v1h-2zM11 23h5v1h-5zM17 23h1v1h-1zM20 23h1v1h-1zM22 23h1v1h-1zM26 23h3v1h-3zM30 23h1v1h-1zM32 23h1v1h-1zM0 24h1v1h-1zM6 24h10v1h-10zM22 24h1v1h-1zM24 24h1v1h-1zM26 24h3v1h-3zM31 24h2v1h-2zM8 25h4v1h-4zM15 25h2v1h-2zM19 25h1v1h-1zM22 25h1v1h-1zM26 25h1v1h-1zM28 25h1v1h-1zM30 25h2v1h-2zM0 26h7v1h-7zM12 26h2v1h-2zM18 26h3v1h-3zM22 26h5v1h-5zM28 26h1v1h-1zM32 26h1v1h-1zM0 27h1v1h-1zM6 27h1v1h-1zM8 27h2v1h-2zM12 27h1v1h-1zM15 27h2v1h-2zM18 27h1v1h-1zM20 27h1v1h-1zM22 27h1v1h-1zM24 27h2v1h-2zM27 27h1v1h-1zM30 27h1v1h-1zM0 28h1v1h-1zM2 28h3v1h-3zM6 28h1v1h-1zM9 28h9v1h-9zM19 28h2v1h-2zM23 28h1v1h-1zM28 28h2v1h-2zM31 28h2v1h-2zM0 29h1v1h-1zM2 29h3v1h-3zM6 29h1v1h-1zM9 29h4v1h-4zM14 29h3v1h-3zM18 29h1v1h-1zM20 29h2v1h-2zM23 29h2v1h-2zM28 29h1v1h-1zM31 29h2v1h-2zM0 30h1v1h-1zM2 30h3v1h-3zM6 30h1v1h-1zM10 30h1v1h-1zM16 30h3v1h-3zM20 30h1v1h-1zM22 30h2v1h-2zM25 30h5v1h-5zM32 30h1v1h-1zM0 31h1v1h-1zM6 31h1v1h-1zM10 31h1v1h-1zM12 31h1v1h-1zM14 31h1v1h-1zM21 31h6v1h-6zM31 31h1v1h-1zM0 32h7v1h-7zM8 32h1v1h-1zM10 32h3v1h-3zM14 32h1v1h-1zM16 32h2v1h-2zM20 32h1v1h-1zM22 32h1v1h-1zM29 32h2v1h-2zM32 32h1v1h-1z"/></svg>
<svg class="a" style="left:1443px;top:640px" width="24" height="24" viewBox="0 0 24 24"><rect x="0" y="0" width="24" height="24" rx="3" fill="#fff"/><rect x="1.5" y="1.5" width="21" height="21" rx="3.5" fill="#ec4b4f"/><path d="M4 15Q6 10 9.5 11.5M7 16L10 12M10.5 15.5Q12.5 10.5 16 12M14 16L16 13M16.5 12Q17.5 11 19.5 13M16.5 15H20" stroke="#fff" stroke-width="1.1" fill="none" stroke-linecap="round"/><path d="M8 11Q12 6.5 17 10" stroke="#fff" stroke-width="0.9" fill="none"/></svg>
<div class="t" style="left:1525px;top:489px;font-size:14px;font-weight:bold;color:#333">下载手机端APP</div>
<div class="t" style="left:1525px;top:518px;font-size:12px;color:#555">版本：V5.0.201805.31</div>
<div class="t" style="left:1525px;top:540px;font-size:12px;color:#555">大小：9.12MB</div>
<div class="t" style="left:1525px;top:562px;font-size:12px;color:#555">适用：Android/IOS</div>
<div class="t" style="left:1525px;top:622px;font-size:14px;font-weight:bold;color:#333">下载平板端APP</div>
<div class="t" style="left:1525px;top:651px;font-size:12px;color:#555">版本：V5.0.201805.31</div>
<div class="t" style="left:1525px;top:673px;font-size:12px;color:#555">大小：8.74MB</div>
<div class="t" style="left:1525px;top:695px;font-size:12px;color:#555">适用：Android/IOS</div>

<div class="a" style="left:1385px;top:752px;width:280px;height:121px;background:#ffd616;overflow:hidden">
<svg class="a" style="left:0;top:0" width="280" height="121" viewBox="0 0 280 121"><g fill="#ffe55a" opacity="0.45">
<ellipse cx="220" cy="10" rx="18" ry="10"/><ellipse cx="245" cy="30" rx="22" ry="16"/><ellipse cx="265" cy="52" rx="14" ry="10"/><ellipse cx="30" cy="30" rx="12" ry="14"/><ellipse cx="110" cy="35" rx="10" ry="8"/><ellipse cx="165" cy="48" rx="8" ry="10"/><ellipse cx="75" cy="78" rx="22" ry="14"/><ellipse cx="35" cy="105" rx="16" ry="22"/><ellipse cx="200" cy="112" rx="20" ry="10"/><ellipse cx="255" cy="115" rx="16" ry="8"/><ellipse cx="150" cy="85" rx="14" ry="6"/><ellipse cx="280" cy="80" rx="14" ry="18"/></g></svg>
<div class="t" style="left:20px;top:22px;font-size:24px;font-weight:bold;color:#8e5fd9;-webkit-text-stroke:0.4px #8e5fd9;text-shadow:0.5px 2.5px 0 #fff;transform:skewX(-5deg);letter-spacing:0px">邀好友注册使用<span style="color:#e9445b;-webkit-text-stroke:0.4px #e9445b">久久客</span></div>
<div class="a" style="left:17px;top:69px;width:246px;height:35px;border-radius:18px;background:#8e5fd9;color:#fff;font-size:18px;line-height:35px;text-align:center;letter-spacing:0.5px">既可获得25%的现金奖励</div>
</div>

</body></html>
